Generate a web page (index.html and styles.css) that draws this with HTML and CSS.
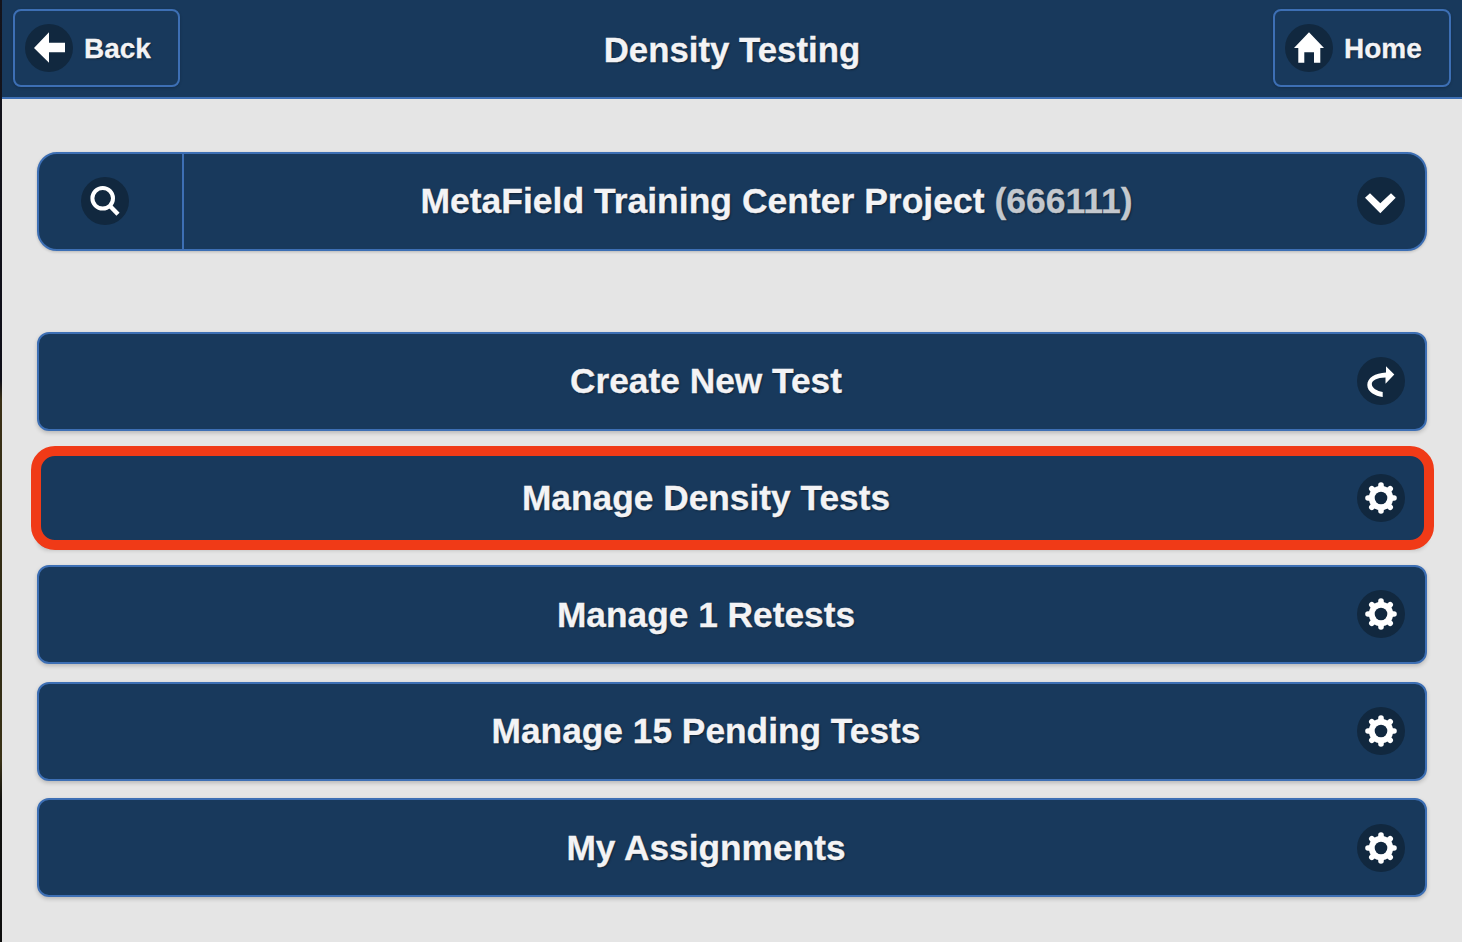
FILE: index.html
```html
<!DOCTYPE html>
<html lang="en">
<head>
<meta charset="utf-8">
<title>Density Testing</title>
<link rel="stylesheet" href="styles.css">
</head>
<body>
<svg class="defs" width="0" height="0" aria-hidden="true">
  <symbol id="gear" viewBox="0 0 48 48">
    <g stroke="#fff" stroke-width="5.6" stroke-linecap="round">
      <path d="M24 11V37M11 24H37M14.8 14.8L33.2 33.2M33.2 14.8L14.8 33.2"/>
    </g>
    <circle cx="24" cy="24" r="12.2" fill="#fff"/>
    <circle cx="24" cy="24" r="6.3" fill="#11283f"/>
  </symbol>
</svg>
<div class="window">
  <div class="edge"></div>
  <div class="app">
    <header class="topbar">
      <a class="navbtn">
        <span class="disc"><svg viewBox="0 0 48 48"><path fill="#fff" d="M9 24 24 8.3V18.7H40V28.3H24V38.7Z"/></svg></span>
        <span class="nav-label">Back</span>
      </a>
      <h1 class="title">Density Testing</h1>
      <a class="navbtn navbtn-home">
        <span class="disc"><svg viewBox="0 0 48 48"><path fill="#fff" d="M24 8.3 39 24H35.3V38.7H29V28.3H19.3V38.7H13.3V24H9Z"/></svg></span>
        <span class="nav-label">Home</span>
      </a>
    </header>
    <main class="content">
      <div class="project">
        <div class="project-search">
          <span class="disc"><svg viewBox="0 0 48 48"><circle cx="21.7" cy="21.3" r="10.3" fill="none" stroke="#fff" stroke-width="4"/><path d="M29 29 37 37.2" stroke="#fff" stroke-width="4.4" fill="none"/></svg></span>
        </div>
        <div class="project-name">MetaField Training Center Project <span class="project-code">(666111)</span></div>
        <span class="disc"><svg viewBox="0 0 48 48"><path fill="#fff" d="M8 20.7 13 16.3 23.3 26.3 34 16.3 38.7 20.7 23.3 36.3Z"/></svg></span>
      </div>
      <nav class="menu">
        <a class="menubtn">
          <span class="menu-label">Create New Test</span>
          <span class="disc"><svg viewBox="0 0 48 48"><path fill="#fff" d="M29 9.3 37.3 17.5 28.5 26.7V20.5C20 20.5 14.8 23.5 14.8 27 14.8 31 20 34 25.7 35V40C18 39 10.3 35 10.3 28 10.3 21 18 16 29 15.5Z"/></svg></span>
        </a>
        <a class="menubtn menubtn-marked">
          <span class="menu-label">Manage Density Tests</span>
          <span class="disc"><svg><use href="#gear"/></svg></span>
        </a>
        <a class="menubtn">
          <span class="menu-label">Manage 1 Retests</span>
          <span class="disc"><svg><use href="#gear"/></svg></span>
        </a>
        <a class="menubtn">
          <span class="menu-label">Manage 15 Pending Tests</span>
          <span class="disc"><svg><use href="#gear"/></svg></span>
        </a>
        <a class="menubtn">
          <span class="menu-label">My Assignments</span>
          <span class="disc"><svg><use href="#gear"/></svg></span>
        </a>
      </nav>
    </main>
  </div>
</div>
</body>
</html>
```
FILE: styles.css
```css
* { box-sizing: border-box; }
html, body { margin: 0; height: 100%; }
body {
  background: #e5e5e5;
  font-family: "Liberation Sans", Arial, sans-serif;
  font-weight: 700;
  color: #f3f3f5;
  overflow: hidden;
  -webkit-text-stroke: .3px currentColor;
}
.defs { display: block; height: 0; }
.window { display: flex; height: 942px; }
.edge {
  width: 2px;
  flex: none;
  background: linear-gradient(to bottom, #14141c 0, #0e0e18 380px, #3a3016 400px, #2f2a14 640px, #3a3216 760px, #12120f 800px, #0d0d0d 100%);
}
.app {
  flex: 1;
  min-width: 0;
  display: flex;
  flex-direction: column;
}
.topbar {
  height: 99px;
  flex: none;
  background: #18395c;
  border-bottom: 2px solid #3d6fb4;
  padding: 9px 11px 0;
  display: grid;
  grid-template-columns: 1fr auto 1fr;
  align-items: start;
}
.navbtn {
  width: 167px;
  height: 78px;
  border: 2px solid #3d6fb4;
  border-radius: 8px;
  padding-left: 10px;
  display: flex;
  align-items: center;
  gap: 11px;
  font-size: 28px;
  text-shadow: 1px 1px 2px rgba(0, 0, 0, .45);
  box-shadow: 0 1px 3px rgba(0, 0, 0, .2);
}
.nav-label { padding-top: 2px; }
.navbtn-home { width: 178px; justify-self: end; }
.title {
  margin: 0;
  font-size: 34.8px;
  line-height: 82px;
  font-weight: 700;
  text-shadow: 1px 1px 2px rgba(0, 0, 0, .45);
}
.disc {
  width: 48px;
  height: 48px;
  flex: none;
  border-radius: 50%;
  background: #11283f;
  display: block;
}
.disc svg { width: 48px; height: 48px; display: block; }
.content { padding: 53px 35px 0; }
.project {
  height: 99px;
  background: #18395c;
  border: 2px solid #3d6fb4;
  border-radius: 20px;
  display: flex;
  align-items: center;
  padding-right: 20px;
  box-shadow: 0 1px 3px rgba(0, 0, 0, .2);
}
.project .disc { margin-bottom: 1px; }
.project-search {
  width: 145px;
  align-self: stretch;
  flex: none;
  border-right: 2px solid #3d6fb4;
  padding-right: 12px;
  display: flex;
  align-items: center;
  justify-content: center;
}
.project-name {
  flex: 1;
  text-align: center;
  font-size: 35.5px;
  padding: 0 0 0 12px;
  text-shadow: 1px 1px 2px rgba(0, 0, 0, .45);
}
.project-code { color: #c3c8ce; }
.menu {
  margin-top: 81px;
  display: flex;
  flex-direction: column;
  gap: 17.5px;
}
.menubtn {
  position: relative;
  height: 99px;
  background: #18395c;
  border: 2px solid #3d6fb4;
  border-radius: 12px;
  display: flex;
  align-items: center;
  padding-right: 20px;
  box-shadow: 0 2px 4px rgba(0, 0, 0, .2);
}
.menubtn .disc { margin-bottom: 1px; }
.menubtn:last-child .disc { margin-bottom: 0; }
.menu-label {
  flex: 1;
  text-align: center;
  font-size: 35.3px;
  padding-left: 16px;
  text-shadow: 1px 1px 2px rgba(0, 0, 0, .45);
}
.menubtn:first-child .menu-label { padding-bottom: 2px; }
.menubtn-marked::after {
  content: "";
  position: absolute;
  left: -8px;
  right: -9px;
  top: -4.5px;
  bottom: -4.5px;
  border: 10px solid #f03a17;
  border-radius: 24px;
}
```
